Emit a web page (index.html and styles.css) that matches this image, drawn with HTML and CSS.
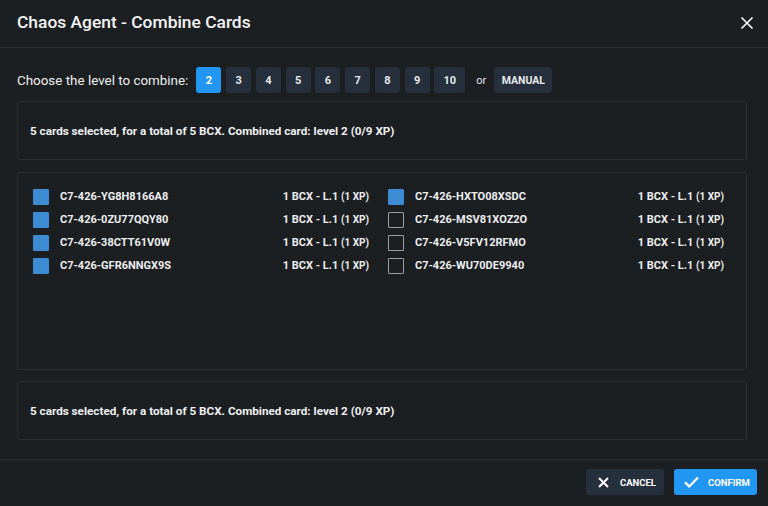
FILE: index.html
```html
<!DOCTYPE html>
<html>
<head>
<meta charset="utf-8">
<link rel="stylesheet" href="styles.css">
</head>
<body>
<div class="dialog">
  <header class="head">
    <h1 class="title">Chaos Agent - Combine Cards</h1>
    <button class="close" aria-label="close">
      <svg width="14" height="14" viewBox="0 0 14 14"><path d="M1.5 1.5L12.5 12.5M12.5 1.5L1.5 12.5" stroke="#fff" stroke-width="1.6" fill="none"/></svg>
    </button>
  </header>
  <main class="body">
    <div class="levels">
      <span class="levels-label">Choose the level to combine:</span>
      <div class="lvl-btns">
        <button class="lvl active">2</button>
        <button class="lvl">3</button>
        <button class="lvl">4</button>
        <button class="lvl">5</button>
        <button class="lvl">6</button>
        <button class="lvl">7</button>
        <button class="lvl">8</button>
        <button class="lvl">9</button>
        <button class="lvl wide">10</button>
      </div>
      <span class="or">or</span>
      <button class="lvl manual">MANUAL</button>
    </div>
    <div class="box summary">5 cards selected, for a total of 5 BCX. Combined card: level 2 (0/9 XP)</div>
    <div class="box list">
      <div class="card"><span class="cb on"></span><span class="cid">C7-426-YG8H8166A8</span><span class="val">1 BCX - L.1 <small>(1 XP)</small></span></div>
      <div class="card"><span class="cb on"></span><span class="cid">C7-426-HXTO08XSDC</span><span class="val">1 BCX - L.1 <small>(1 XP)</small></span></div>
      <div class="card"><span class="cb on"></span><span class="cid">C7-426-0ZU77QQY80</span><span class="val">1 BCX - L.1 <small>(1 XP)</small></span></div>
      <div class="card"><span class="cb"></span><span class="cid">C7-426-MSV81XOZ2O</span><span class="val">1 BCX - L.1 <small>(1 XP)</small></span></div>
      <div class="card"><span class="cb on"></span><span class="cid">C7-426-38CTT61V0W</span><span class="val">1 BCX - L.1 <small>(1 XP)</small></span></div>
      <div class="card"><span class="cb"></span><span class="cid">C7-426-V5FV12RFMO</span><span class="val">1 BCX - L.1 <small>(1 XP)</small></span></div>
      <div class="card"><span class="cb on"></span><span class="cid">C7-426-GFR6NNGX9S</span><span class="val">1 BCX - L.1 <small>(1 XP)</small></span></div>
      <div class="card"><span class="cb"></span><span class="cid">C7-426-WU70DE9940</span><span class="val">1 BCX - L.1 <small>(1 XP)</small></span></div>
    </div>
    <div class="box summary s2">5 cards selected, for a total of 5 BCX. Combined card: level 2 (0/9 XP)</div>
  </main>
  <footer class="foot">
    <button class="act cancel">
      <svg width="11" height="11" viewBox="0 0 11 11"><path d="M1 1L10 10M10 1L1 10" stroke="#fff" stroke-width="2" fill="none"/></svg>
      CANCEL
    </button>
    <button class="act confirm">
      <svg width="15" height="12" viewBox="0 0 15 12"><path d="M1 6.2L5.2 10.4L14 1.5" stroke="#fff" stroke-width="2.2" fill="none"/></svg>
      CONFIRM
    </button>
  </footer>
</div>
</body>
</html>
```

FILE: styles.css
```css
* { box-sizing: border-box; }
html, body { margin: 0; padding: 0; }
body {
  background: #1c1f22;
  color: #e8eaec;
  font-family: Roboto, "Liberation Sans", sans-serif;
  width: 768px;
  height: 506px;
  overflow: hidden;
}
button {
  font-family: Roboto, "Liberation Sans", sans-serif;
  border: none;
  cursor: pointer;
}
.head {
  height: 48px;
  display: flex;
  align-items: center;
  justify-content: space-between;
  padding: 0 14px 0 17px;
  border-bottom: 1px solid #2a2e33;
}
.title {
  margin: 0;
  font-size: 17.4px;
  font-weight: 500;
  color: #f4f5f6;
  position: relative;
  top: -2px;
}
.close {
  background: none;
  padding: 0;
  width: 14px;
  height: 14px;
  display: flex;
  position: relative;
  top: -1px;
}
.body {
  padding: 19px 21px 0 17px;
}
.levels {
  display: flex;
  align-items: center;
  height: 26px;
}
.levels-label {
  font-size: 13.4px;
  color: #eceff1;
  margin-right: 8px;
}
.lvl-btns {
  display: flex;
  gap: 4.75px;
}
.lvl {
  height: 26px;
  width: 25px;
  padding: 0;
  border-radius: 3px;
  background: #26303c;
  color: #e6e9ec;
  font-size: 11px;
  font-weight: 700;
}
.lvl.wide { width: 31px; }
.lvl.active { background: #2196f3; color: #fff; }
.or {
  font-size: 11px;
  color: #e0e3e6;
  margin: 0 8px 0 11px;
}
.lvl.manual { width: 58px; font-size: 10.5px; }
.box {
  border: 1px solid #2b2f34;
  border-radius: 3px;
}
.summary {
  margin-top: 8px;
  height: 59px;
  display: flex;
  align-items: center;
  padding-left: 12px;
  font-size: 11.7px;
  font-weight: 700;
  color: #eef0f2;
}
.summary.s2 {
  margin-top: 11px;
  height: 59px;
}
.list {
  margin-top: 12px;
  height: 198px;
  padding: 12px 22px 0 15px;
  display: grid;
  grid-template-columns: 1fr 1fr;
  column-gap: 19px;
  grid-auto-rows: 23px;
  align-content: start;
}
.card {
  display: flex;
  align-items: center;
  font-size: 11px;
  font-weight: 700;
  color: #eceef0;
}
.cb {
  width: 16px;
  height: 16px;
  border: 1px solid #9a9ea3;
  border-radius: 1px;
  margin-right: 11px;
  flex: none;
}
.cb.on {
  background: #3c8bd3;
  border-color: #3c8bd3;
}
.cid { flex: 1; }
.val { white-space: nowrap; }
.val small { font-size: 10px; }
.foot {
  margin-top: 19px;
  border-top: 1px solid #2a2e33;
  padding: 9px 11px 0 0;
  display: flex;
  justify-content: flex-end;
  gap: 10px;
}
.act {
  height: 26px;
  border-radius: 3px;
  display: flex;
  align-items: center;
  color: #fff;
  font-size: 9.5px;
  font-weight: 700;
  gap: 11px;
}
.cancel {
  background: #26303c;
  width: 78px;
  padding-left: 12px;
}
.confirm {
  background: #2196f3;
  width: 83px;
  padding-left: 10px;
  gap: 9px;
}
```
